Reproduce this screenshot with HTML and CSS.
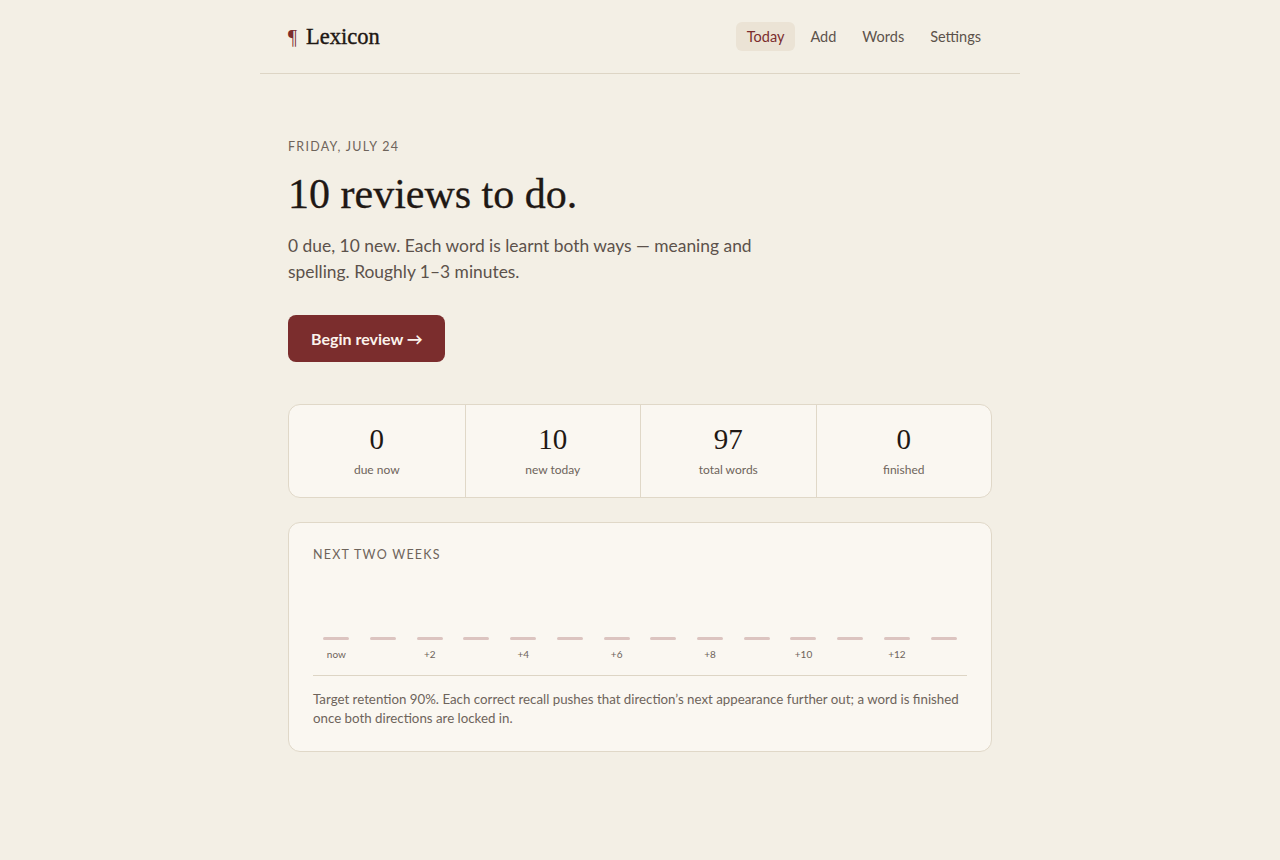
FILE: index.html
```html
<!DOCTYPE html>
<html lang="en">

<head>
    <meta charset="UTF-8">
    <meta name="viewport" content="width=device-width, initial-scale=1.0">
    <title>Lexicon</title>
    <link rel="stylesheet" href="styles.css">
</head>

<body>
    <div class="page">
        <header class="topbar">
            <div class="logo"><span class="logo-mark">¶</span><span>Lexicon</span></div>
            <nav class="nav">
                <a class="nav-link active" href="#">Today</a>
                <a class="nav-link" href="#">Add</a>
                <a class="nav-link" href="#">Words</a>
                <a class="nav-link" href="#">Settings</a>
            </nav>
        </header>

        <main class="content">
            <div class="date">Friday, July 24</div>
            <h1 class="headline">10 reviews to do.</h1>
            <p class="lede">0 due, 10 new. Each word is learnt both ways — meaning and spelling. Roughly 1–3 minutes.</p>
            <button class="btn">Begin review →</button>

            <div class="stats">
                <div class="stat">
                    <div class="stat-num">0</div>
                    <div class="stat-label">due now</div>
                </div>
                <div class="stat">
                    <div class="stat-num">10</div>
                    <div class="stat-label">new today</div>
                </div>
                <div class="stat">
                    <div class="stat-num">97</div>
                    <div class="stat-label">total words</div>
                </div>
                <div class="stat">
                    <div class="stat-num">0</div>
                    <div class="stat-label">finished</div>
                </div>
            </div>

            <section class="card">
                <div class="card-title">Next two weeks</div>
                <div class="chart">
                    <div class="day"><div class="bar"></div><span>now</span></div>
                    <div class="day"><div class="bar"></div><span></span></div>
                    <div class="day"><div class="bar"></div><span>+2</span></div>
                    <div class="day"><div class="bar"></div><span></span></div>
                    <div class="day"><div class="bar"></div><span>+4</span></div>
                    <div class="day"><div class="bar"></div><span></span></div>
                    <div class="day"><div class="bar"></div><span>+6</span></div>
                    <div class="day"><div class="bar"></div><span></span></div>
                    <div class="day"><div class="bar"></div><span>+8</span></div>
                    <div class="day"><div class="bar"></div><span></span></div>
                    <div class="day"><div class="bar"></div><span>+10</span></div>
                    <div class="day"><div class="bar"></div><span></span></div>
                    <div class="day"><div class="bar"></div><span>+12</span></div>
                    <div class="day"><div class="bar"></div><span></span></div>
                </div>
                <p class="card-note">Target retention 90%. Each correct recall pushes that direction’s next appearance further out; a word is finished once both directions are locked in.</p>
            </section>
        </main>
    </div>
</body>

</html>
```

FILE: styles.css
```css
body {
    margin: 0;
    padding: 0;
    background: #f3efe5;
    color: #2a211c;
    font-family: 'Lato', 'Noto Sans', sans-serif;
}

.page {
    width: 760px;
    margin: 0 auto;
}

.topbar {
    display: flex;
    justify-content: space-between;
    align-items: center;
    height: 74px;
    padding: 0 28px;
    border-bottom: 1px solid #ddd5c5;
    box-sizing: border-box;
}

.logo {
    display: flex;
    align-items: baseline;
    gap: 9px;
    font-family: 'Liberation Serif', serif;
    font-size: 22.5px;
    color: #1f1814;
    -webkit-text-stroke: 0.4px #1f1814;
}

.logo-mark {
    color: #7b2d2d;
    font-size: 20px;
    -webkit-text-stroke: 0;
}

.nav {
    display: flex;
    gap: 4px;
}

.nav-link {
    font-size: 14.5px;
    color: #5c524b;
    text-decoration: none;
    padding: 6px 11px;
    border-radius: 6px;
}

.nav-link.active {
    background: #ebe3d5;
    color: #7b2d2d;
}

.content {
    padding: 65px 28px 60px;
}

.date {
    font-size: 12.5px;
    letter-spacing: 0.1em;
    text-transform: uppercase;
    color: #6e645b;
}

.headline {
    font-family: 'Liberation Serif', serif;
    font-weight: 400;
    font-size: 42px;
    margin: 15px 0 14px;
    color: #1f1814;
    line-height: 1.2;
    -webkit-text-stroke: 0.3px #1f1814;
}

.lede {
    font-size: 17.4px;
    line-height: 26px;
    color: #5c524b;
    max-width: 480px;
    margin: 0 0 30px;
}

.btn {
    background: #7b2d2d;
    color: #fbf3ec;
    border: none;
    border-radius: 8px;
    padding: 0 22px 0 23px;
    height: 47px;
    font-family: inherit;
    font-size: 16px;
    font-weight: 700;
    cursor: pointer;
}

.stats {
    display: grid;
    grid-template-columns: repeat(4, 1fr);
    margin-top: 42px;
    background: #faf7f1;
    border: 1px solid #e0d8c8;
    border-radius: 12px;
    overflow: hidden;
}

.stat {
    text-align: center;
    padding: 16px 0 20px;
    border-left: 1px solid #e0d8c8;
}

.stat:first-child {
    border-left: none;
}

.stat-num {
    font-family: 'Liberation Serif', serif;
    font-size: 29px;
    line-height: 36px;
    color: #1f1814;
}

.stat-label {
    font-size: 12px;
    color: #6e645b;
    margin-top: 5px;
}

.card {
    margin-top: 24px;
    background: #faf7f1;
    border: 1px solid #e0d8c8;
    border-radius: 12px;
    padding: 24px 24px 23px;
}

.card-title {
    font-size: 12.5px;
    letter-spacing: 0.1em;
    text-transform: uppercase;
    color: #6e645b;
}

.chart {
    display: grid;
    grid-template-columns: repeat(14, 1fr);
    height: 98px;
    align-items: end;
    padding-bottom: 15px;
    border-bottom: 1px solid #ddd5c5;
}

.day {
    display: flex;
    flex-direction: column;
    align-items: center;
    gap: 8px;
}

.bar {
    width: 26px;
    height: 3px;
    border-radius: 2px;
    background: #dcc4c0;
}

.day span {
    font-size: 10px;
    height: 12px;
    line-height: 12px;
    color: #6e645b;
}

.card-note {
    margin: 14px 0 0;
    font-size: 13.3px;
    line-height: 19px;
    color: #6e645b;
}
```
